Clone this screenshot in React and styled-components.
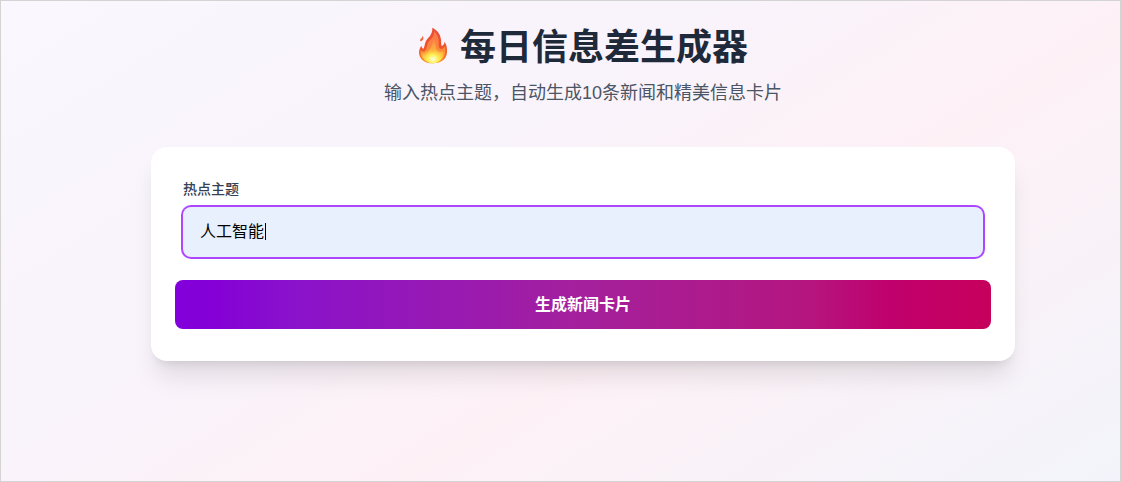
// src/App.jsx
import React, { useState } from "react";
import styled, { createGlobalStyle } from "styled-components";

const GlobalStyle = createGlobalStyle`
  * {
    box-sizing: border-box;
  }
  body {
    margin: 0;
    font-family: "Liberation Sans", "Noto Sans CJK SC", sans-serif;
  }
`;

const Page = styled.div`
  min-height: 100vh;
  padding: 22px 0 22px 45px;
  border: 1px solid #d4d4d4;
  background: linear-gradient(148deg, #faf7ff, #f9f3fb 38%, #fdf1f6 62%, #f3f4fb);
`;

const Container = styled.main`
  width: 100%;
  max-width: 864px;
  margin: 0 auto;
`;

const Header = styled.header`
  display: flex;
  flex-direction: column;
  align-items: center;
  gap: 6px;
  margin-bottom: 40px;
`;

const Title = styled.h1`
  display: flex;
  align-items: center;
  gap: 12px;
  margin: 0;
  color: #1e2939;
  font-size: 36px;
  font-weight: bold;
  line-height: 50px;
`;

const Flame = styled.svg`
  width: 30px;
  height: 37px;
  margin-bottom: 6px;
`;

const Subtitle = styled.p`
  margin: 0;
  color: #4a5565;
  font-size: 18px;
  line-height: 28px;
`;

const Card = styled.form`
  display: flex;
  flex-direction: column;
  padding: 32px;
  border-radius: 16px;
  background-color: #fff;
  box-shadow: 0 20px 25px -5px rgba(0, 0, 0, 0.1),
    0 8px 10px -6px rgba(0, 0, 0, 0.1);
`;

const Label = styled.label`
  margin-bottom: 8px;
  color: #364153;
  font-size: 14px;
  font-weight: 500;
  line-height: 20px;
`;

const Field = styled.div`
  position: relative;
  margin-bottom: 23px;
`;

const Input = styled.input`
  display: block;
  width: 100%;
  height: 50px;
  padding: 0 17px 4px;
  border: none;
  border-radius: 8px;
  outline: none;
  background-color: #e8f0fe;
  box-shadow: 0 0 0 2px #ad46ff;
  color: #000;
  font-family: inherit;
  font-size: 16px;
  caret-color: transparent;
`;

const Caret = styled.span`
  position: absolute;
  top: 16px;
  left: calc(18px + 4em);
  width: 1px;
  height: 17px;
  background-color: #000;
`;

const Button = styled.button`
  height: 49px;
  margin: 0 -8px;
  padding: 0 0 4px;
  border: none;
  border-radius: 8px;
  background: linear-gradient(
    to right,
    #8200db,
    #8400d6 5%,
    #8a12cc 14%,
    #a4209c 50%,
    #b41680 77%,
    #c0006c 88%,
    #c6005c
  );
  color: #fff;
  font-family: inherit;
  font-size: 16px;
  font-weight: 600;
  cursor: pointer;
`;

const FlameIcon = () => (
  <Flame viewBox="0 0 90 111" aria-hidden="true">
    <defs>
      <linearGradient id="flameOuter" x1="0" y1="0" x2="0" y2="1">
        <stop offset="0" stopColor="#e94f38" />
        <stop offset="0.55" stopColor="#f0522b" />
        <stop offset="1" stopColor="#fb8b23" />
      </linearGradient>
      <linearGradient id="flameMiddle" x1="0" y1="0" x2="0" y2="1">
        <stop offset="0" stopColor="#f9754d" />
        <stop offset="0.6" stopColor="#fb8a3a" />
        <stop offset="1" stopColor="#ffd33c" />
      </linearGradient>
      <linearGradient id="flameInner" x1="0" y1="0" x2="0" y2="1">
        <stop offset="0" stopColor="#fb9145" />
        <stop offset="0.5" stopColor="#fdb23d" />
        <stop offset="1" stopColor="#ffe04a" />
      </linearGradient>
      <radialGradient id="flameCore" cx="0.5" cy="0.75" r="0.6">
        <stop offset="0" stopColor="#fffde0" />
        <stop offset="0.4" stopColor="#fff25a" />
        <stop offset="1" stopColor="#ffc233" stopOpacity="0" />
      </radialGradient>
    </defs>
    <path
      fill="url(#flameOuter)"
      d="M43 2C58 9 68 23 69 38C70 47 69 52 71 57C76 55 79 50 80 44C85 52 88 62 87 76C86 96 70 109 45 109C20 109 4 96 3 77C3 69 6 61 10 56C11 62 14 65 17 65C20 58 20 50 24 42C29 31 44 25 43 2Z"
    />
    <path fill="#f06a43" d="M14 26C18 31 17 38 11 42C7 45 5 41 7 37C9 33 14 32 14 26Z" />
    <path
      fill="url(#flameMiddle)"
      d="M48 12C59 22 63 36 62 49C61 60 63 65 69 66C75 66 79 60 81 56C86 77 77 106 45 107C18 107 6 91 8 69C12 77 20 76 24 68C28 57 27 52 33 43C41 34 49 30 48 12Z"
    />
    <path
      fill="url(#flameInner)"
      d="M46 38C56 52 52 66 58 73C64 79 72 76 75 72C76 91 64 106 45 107C26 107 14 96 15 81C21 86 28 81 32 73C37 62 45 56 46 38Z"
    />
    <ellipse cx="45" cy="83" rx="31" ry="26" fill="url(#flameCore)" />
  </Flame>
);

const App = () => {
  const [topic, setTopic] = useState("人工智能");
  const [edited, setEdited] = useState(false);

  const handleChange = (e) => {
    setTopic(e.target.value);
    setEdited(true);
  };

  const handleSubmit = (e) => {
    e.preventDefault();
  };

  return (
    <Page lang="zh-CN">
      <GlobalStyle />
      <Container>
        <Header>
          <Title>
            <FlameIcon />
            每日信息差生成器
          </Title>
          <Subtitle>输入热点主题，自动生成10条新闻和精美信息卡片</Subtitle>
        </Header>
        <Card onSubmit={handleSubmit}>
          <Label htmlFor="topic">热点主题</Label>
          <Field>
            <Input
              id="topic"
              type="text"
              value={topic}
              onChange={handleChange}
            />
            {!edited && <Caret />}
          </Field>
          <Button type="submit">生成新闻卡片</Button>
        </Card>
      </Container>
    </Page>
  );
};

export default App;
